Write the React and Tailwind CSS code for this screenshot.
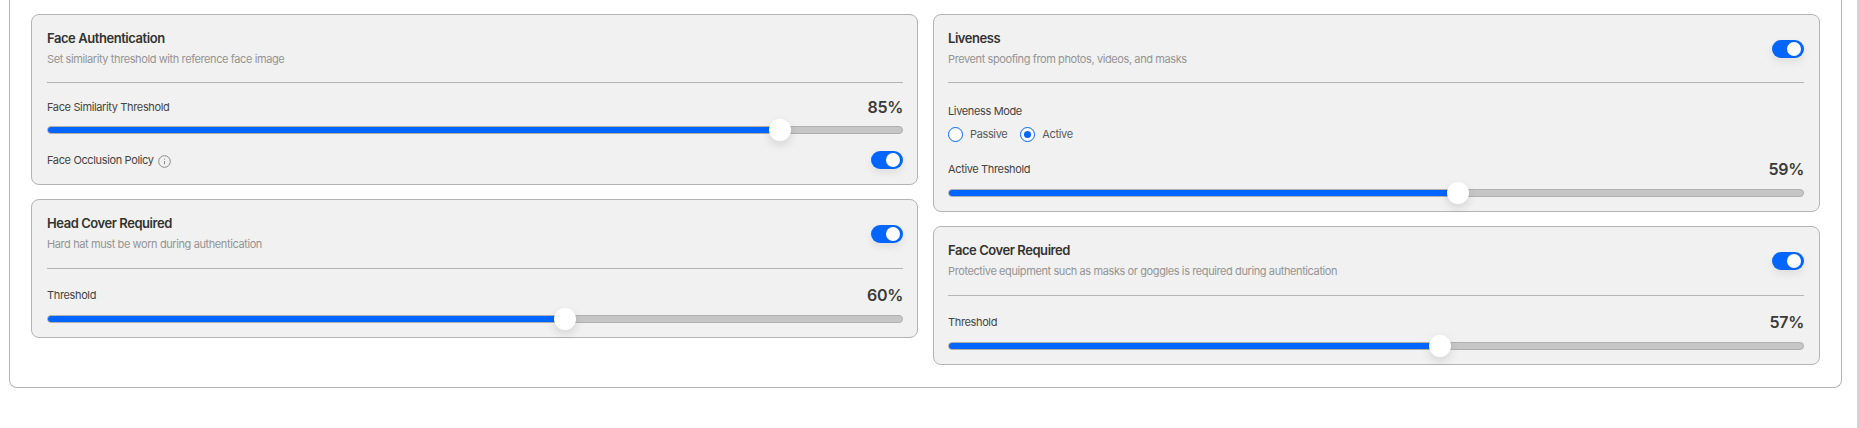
const FONT = "font-['Inter','Noto_Sans',sans-serif]";

function Toggle() {
  return (
    <div className="relative h-[18px] w-8 shrink-0 rounded-full bg-[#0066ff] shadow-[0_4px_8px_rgba(0,0,0,0.08)]">
      <div className="absolute right-[3px] top-[2px] h-[14px] w-[14px] rounded-full bg-white" />
    </div>
  );
}

function Slider({ value, thumb }) {
  return (
    <div className="relative h-2 rounded-full border border-[#b0b0b0] bg-[#c6c6c6]">
      <div className="absolute inset-y-0 left-0 rounded-full bg-[#0066ff]" style={{ right: `${100 - value}%` }} />
      <div
        className="absolute top-1/2 h-[22px] w-[22px] -translate-x-1/2 -translate-y-1/2 rounded-full bg-white shadow-[0_4px_10px_rgba(0,0,0,0.12)]"
        style={{ left: `${thumb}%` }}
      />
    </div>
  );
}

function Header({ title, desc, toggle, tall }) {
  return (
    <div className={`flex items-center justify-between border-b border-[#b4b4b4] ${tall ? "pb-[14px]" : "pb-[13px]"}`}>
      <div>
        <div className="text-[13px] font-semibold leading-5 tracking-[-0.44px] text-[#333333]">{title}</div>
        <div className="mt-px text-[11px] leading-5 tracking-[-0.4px] text-[#949494]">{desc}</div>
      </div>
      {toggle && <Toggle />}
    </div>
  );
}

function ValueRow({ label, value }) {
  return (
    <div className="flex items-center justify-between">
      <span className="text-[11px] leading-5 tracking-[-0.36px] text-[#444444]">{label}</span>
      <span className="text-base font-semibold leading-6 tracking-[-0.3px] text-[#3a3a3a]">{value}%</span>
    </div>
  );
}

function CardLeft({ children }) {
  return <div className="rounded-lg border border-[#b4b4b4] bg-[#f1f1f1] pb-[14px] pl-[15px] pr-[14px] pt-[13px]">{children}</div>;
}

function CardRight({ children }) {
  return <div className="rounded-lg border border-[#b4b4b4] bg-[#f1f1f1] pb-[14px] pl-[14px] pr-[15px] pt-[13px]">{children}</div>;
}

function Radio({ label, checked }) {
  return (
    <div className="flex items-center gap-[7px]">
      <span className="flex h-[15px] w-[15px] items-center justify-center rounded-full border border-[#0066ff] bg-white">
        {checked && <span className="h-[7px] w-[7px] rounded-full bg-[#0066ff]" />}
      </span>
      <span className="text-[11px] leading-4 tracking-[-0.36px] text-[#5a5a5a]">{label}</span>
    </div>
  );
}

function InfoIcon() {
  return (
    <svg width="13" height="13" viewBox="0 0 13 13" fill="none" stroke="#8a8a8a" className="mt-[2px]">
      <circle cx="6.5" cy="6.5" r="5.8" />
      <path d="M6.5 6v3.2M6.5 3.7v1" />
    </svg>
  );
}

export default function App() {
  return (
    <div className={`${FONT} relative h-[428px] w-full overflow-hidden bg-white`}>
      <div className="ml-[9px] mr-[17px] rounded-b-lg border-x border-b border-[#b4b4b4] pb-[22px] pl-[21px] pr-[21px] pt-[14px]">
        <div className="grid grid-cols-2 items-start gap-[15px]">
          <div className="flex flex-col gap-[14px]">
            <CardLeft>
              <Header title="Face Authentication" desc="Set similarity threshold with reference face image" />
              <div className="mt-[12px]"><ValueRow label="Face Similarity Threshold" value={85} /></div>
              <div className="mt-[7px]"><Slider value={85} thumb={85.7} /></div>
              <div className="mt-[16px] flex items-center justify-between">
                <div className="flex items-center gap-1 text-[11px] leading-5 tracking-[-0.36px] text-[#444444]">Face Occlusion Policy <InfoIcon /></div>
                <Toggle />
              </div>
            </CardLeft>
            <CardLeft>
              <Header title="Head Cover Required" desc="Hard hat must be worn during authentication" toggle tall />
              <div className="mt-[14px]"><ValueRow label="Threshold" value={60} /></div>
              <div className="mt-[8px]"><Slider value={60} thumb={60.5} /></div>
            </CardLeft>
          </div>
          <div className="flex flex-col gap-[14px]">
            <CardRight>
              <Header title="Liveness" desc="Prevent spoofing from photos, videos, and masks" toggle />
              <div className="mt-[18px] text-[11px] leading-5 tracking-[-0.36px] text-[#444444]">Liveness Mode</div>
              <div className="mt-[5px] flex gap-[13px]">
                <Radio label="Passive" />
                <Radio label="Active" checked />
              </div>
              <div className="mt-[15px]"><ValueRow label="Active Threshold" value={59} /></div>
              <div className="mt-[8px]"><Slider value={59} thumb={59.6} /></div>
            </CardRight>
            <CardRight>
              <Header title="Face Cover Required" desc="Protective equipment such as masks or goggles is required during authentication" toggle tall />
              <div className="mt-[14px]"><ValueRow label="Threshold" value={57} /></div>
              <div className="mt-[8px]"><Slider value={57} thumb={57.5} /></div>
            </CardRight>
          </div>
        </div>
      </div>
      <div className="absolute inset-y-0 right-0 w-[2px] bg-[#d2d2d2]" />
    </div>
  );
}
